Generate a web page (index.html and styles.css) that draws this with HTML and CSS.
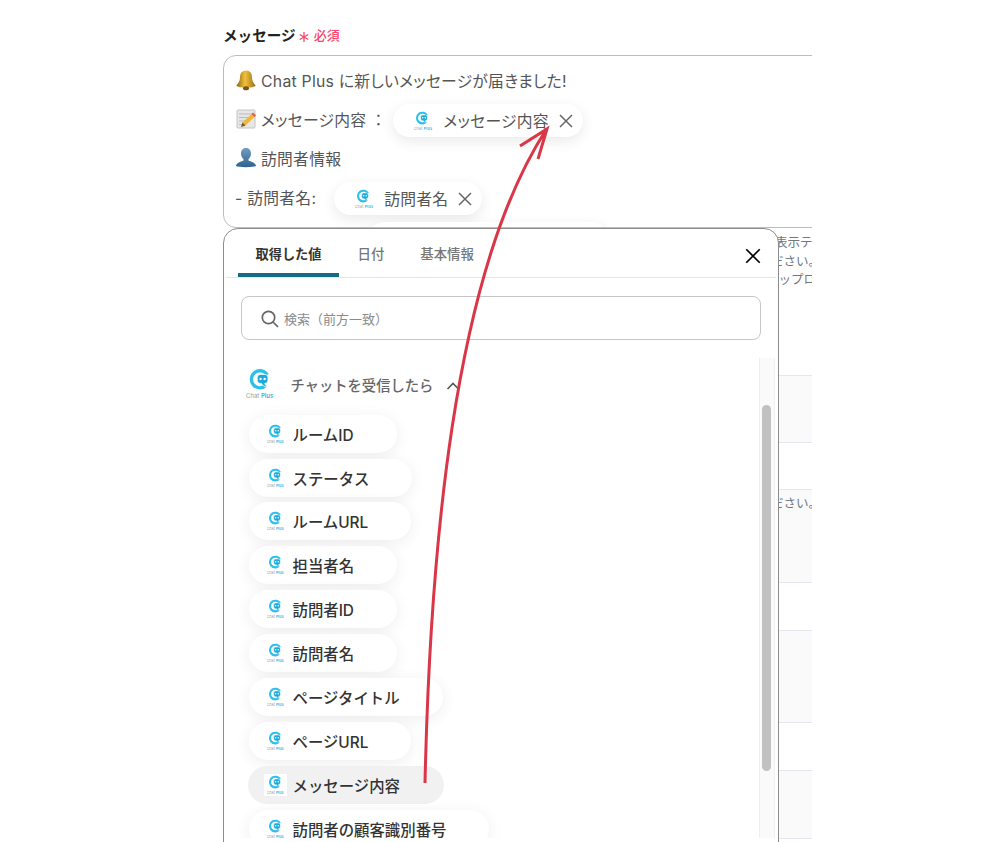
FILE: index.html
```html
<!DOCTYPE html>
<html lang="ja">
<head>
<meta charset="utf-8">
<title>メッセージ</title>
<link rel="stylesheet" href="styles.css">
</head>
<body>
<svg class="defs" width="0" height="0" aria-hidden="true">
  <symbol id="logo" viewBox="0 0 30 30">
    <path d="M19.700 16.200A8 8 0 1 1 20.900 6.500" fill="none" stroke="#2cc0ec" stroke-width="3.100"/>
    <path d="M14.300 6h4.400a2.800 2.800 0 0 1 2.800 2.800v2.900a2.800 2.800 0 0 1-2.800 2.800h-.2l2 3.500c-2.200-.4-3.900-1.800-5-3.500h-1.200a2.800 2.800 0 0 1-2.800-2.800V8.800A2.800 2.800 0 0 1 14.300 6z" fill="#1fa9da" stroke="#fff" stroke-width=".7"/>
    <circle cx="14.600" cy="10.200" r="1.100" fill="#fff"/>
    <circle cx="18.400" cy="10.200" r="1.100" fill="#fff"/>
    <text x="1" y="28.500" class="logo-text">Chat <tspan class="logo-plus">Plus</tspan></text>
  </symbol>
  <symbol id="close" viewBox="0 0 16 16">
    <path d="M2 2l12 12M14 2L2 14" fill="none" stroke="currentColor" stroke-width="1.500"/>
  </symbol>
</svg>

<div class="canvas">
  <div class="form">
    <div class="label-row">
      <span class="label">メッセージ</span>
      <svg class="asterisk" viewBox="0 0 10 10"><path d="M5 0v10M.7 2.500l8.600 5M.7 7.500l8.600-5" stroke="#f4476b" stroke-width="1.300"/></svg>
      <span class="required">必須</span>
    </div>

    <div class="editor">
      <div class="line">
        <svg class="emoji" viewBox="0 0 22 22">
          <defs><linearGradient id="bell" x1="0" x2="1"><stop offset="0" stop-color="#8a6414"/><stop offset=".45" stop-color="#f0c13c"/><stop offset="1" stop-color="#9a7015"/></linearGradient></defs>
          <path d="M11 1.500c-4 0-6 3-6 6.500 0 4-1.500 6-3.700 8.500 1 1.500 5 2.200 9.700 2.200s8.700-.7 9.700-2.200C18.500 14 17 12 17 8c0-3.500-2-6.500-6-6.500z" fill="url(#bell)"/>
          <ellipse cx="11" cy="19.300" rx="3" ry="2" fill="#7a5510"/>
        </svg>
        <span>Chat Plus に新しいメッセージが届きました!</span>
      </div>
      <div class="line">
        <svg class="emoji" viewBox="0 0 22 22">
          <rect x="2" y="2" width="18" height="18" rx="1" fill="#e6e6e6" stroke="#c4c4c4"/>
          <path d="M4 6h14M4 9.500h14M4 13h8M4 16.500h5" stroke="#bbb"/>
          <path d="M6 19l1.500-4.500L16.500 6l3 3-9 8.500z" fill="#f2b632"/>
          <path d="M16.500 6l1.500-1.500 3 3L19.500 9z" fill="#e2574c"/>
          <path d="M6 19l1.500-4.500 3 3z" fill="#6b5a3c"/>
        </svg>
        <span>メッセージ内容</span>
        <span class="colon">：</span>
        <span class="token token-a">
          <svg class="token-logo"><use href="#logo"/></svg>
          <span>メッセージ内容</span>
          <svg class="token-x"><use href="#close"/></svg>
        </span>
      </div>
      <div class="line">
        <svg class="emoji" viewBox="0 0 22 22">
          <defs><linearGradient id="bust" x1="0" x2="0" y1="0" y2="1"><stop offset="0" stop-color="#6f9dc4"/><stop offset="1" stop-color="#2f628e"/></linearGradient></defs>
          <path d="M11 1c-3.500 0-5 2.600-5 5.500 0 2.300 1 4.300 2.500 5.500v1.500c-2 1.200-7 1.800-7.500 5.500 3 1.500 17 1.500 20 0-.5-3.700-5.500-4.300-7.500-5.500V12c1.500-1.200 2.500-3.200 2.500-5.500C16 3.600 14.500 1 11 1z" fill="url(#bust)"/>
        </svg>
        <span>訪問者情報</span>
      </div>
      <div class="line">
        <span>- 訪問者名:</span>
        <span class="token token-b">
          <svg class="token-logo"><use href="#logo"/></svg>
          <span>訪問者名</span>
          <svg class="token-x"><use href="#close"/></svg>
        </span>
      </div>
      <div class="line">
        <span class="token token-c">
          <svg class="token-logo"><use href="#logo"/></svg>
          <span>訪問者の顧客識別番号</span>
        </span>
      </div>
    </div>

    <div class="notes">
      <p class="note-a">表示テキスト</p>
      <p class="note-b">ださい。</p>
      <p class="note-c">アップロード</p>
    </div>
    <div class="band band-tall-a"></div>
    <div class="band-plain band-plain-a"></div>
    <div class="band band-tall-b"><p class="band-note">ださい。</p></div>
    <div class="band-plain band-plain-b"></div>
    <div class="band band-tall-c"></div>
    <div class="band-plain band-plain-b"></div>
    <div class="band band-tall-d"></div>
  </div>

  <div class="popup">
    <div class="tabs">
      <span class="tab tab-active">取得した値</span>
      <span class="tab">日付</span>
      <span class="tab">基本情報</span>
      <svg class="popup-close"><use href="#close"/></svg>
    </div>
    <div class="search">
      <svg class="search-icon" viewBox="0 0 18 18"><circle cx="7.500" cy="7.500" r="6.200" fill="none" stroke="#666" stroke-width="1.700"/><path d="M12 12l5 5" stroke="#666" stroke-width="1.700"/></svg>
      <span>検索（前方一致）</span>
    </div>
    <div class="results">
      <div class="list">
        <div class="group">
          <svg class="group-logo"><use href="#logo"/></svg>
          <span class="group-name">チャットを受信したら</span>
          <svg class="chevron" viewBox="0 0 14 8"><path d="M1.500 7L7 1.500 12.500 7" fill="none" stroke="#555" stroke-width="1.600"/></svg>
        </div>
        <div class="chips">
          <div class="chip"><span class="chip-icon"><svg class="chip-logo"><use href="#logo"/></svg></span>ルームID</div>
          <div class="chip"><span class="chip-icon"><svg class="chip-logo"><use href="#logo"/></svg></span>ステータス</div>
          <div class="chip"><span class="chip-icon"><svg class="chip-logo"><use href="#logo"/></svg></span>ルームURL</div>
          <div class="chip"><span class="chip-icon"><svg class="chip-logo"><use href="#logo"/></svg></span>担当者名</div>
          <div class="chip"><span class="chip-icon"><svg class="chip-logo"><use href="#logo"/></svg></span>訪問者ID</div>
          <div class="chip"><span class="chip-icon"><svg class="chip-logo"><use href="#logo"/></svg></span>訪問者名</div>
          <div class="chip"><span class="chip-icon"><svg class="chip-logo"><use href="#logo"/></svg></span>ページタイトル</div>
          <div class="chip"><span class="chip-icon"><svg class="chip-logo"><use href="#logo"/></svg></span>ページURL</div>
          <div class="chip chip-hover"><span class="chip-icon"><svg class="chip-logo"><use href="#logo"/></svg></span>メッセージ内容</div>
          <div class="chip"><span class="chip-icon"><svg class="chip-logo"><use href="#logo"/></svg></span>訪問者の顧客識別番号</div>
        </div>
      </div>
      <div class="scrollbar"><div class="thumb"></div></div>
    </div>
  </div>

  <svg class="arrow" viewBox="0 0 1000 842" width="1000" height="842">
    <path d="M425 783C430 560 452 275 546 130M520 146L547 129 538 159" fill="none" stroke="#d93648" stroke-width="3"/>
  </svg>
</div>
</body>
</html>
```

FILE: styles.css
```css
* { box-sizing: border-box; }
html, body { margin: 0; padding: 0; background: #fff; }
body {
  width: 1000px;
  height: 842px;
  overflow: hidden;
  font-family: Inter, "Noto Sans CJK JP", sans-serif;
  color: #555;
  text-spacing-trim: space-all;
}
p { margin: 0; }
.defs { position: absolute; }
.logo-text { font: 5.600px Inter, sans-serif; fill: #999ea3; }
.logo-plus { font-weight: 600; fill: #29b9e8; }

.canvas {
  position: relative;
  width: 1000px;
  height: 842px;
  overflow: hidden;
  padding-left: 223px;
}
.form {
  width: 589px;
  height: 842px;
  overflow: hidden;
  padding-top: 23px;
}

.label-row {
  display: flex;
  align-items: center;
  height: 22px;
  margin-bottom: 10px;
}
.label { font-size: 14.600px; font-weight: 700; color: #222; }
.asterisk { width: 10px; height: 10px; margin: 6px 0 0 3px; flex: none; }
.required { font-size: 13px; color: #f8486c; margin-left: 5px; font-weight: 500; }

.editor {
  width: 640px;
  height: 173px;
  overflow: hidden;
  border: 1px solid #bdbdbd;
  border-radius: 13px;
  padding: 4.500px 0 0 11px;
  font-size: 15.800px;
  letter-spacing: .25px;
  font-feature-settings: "palt";
}
.line {
  display: flex;
  align-items: center;
  height: 39px;
  white-space: nowrap;
}
.colon { margin-left: 8px; }
.emoji { width: 22px; height: 22px; margin-right: 4px; flex: none; }
.token {
  display: inline-flex;
  align-items: center;
  height: 33px;
  margin-top: 3px;
  background: #fff;
  border-radius: 17px;
  box-shadow: 0 4px 14px rgba(0, 0, 0, .09);
  padding: 0 9px 0 20px;
}
.token-a { margin-left: 11px; }
.token-b { margin-left: 18px; }
.token-c { margin-left: 133px; margin-top: 5px; padding-right: 30px; }
.token-logo { width: 20px; height: 20px; margin-right: 10px; flex: none; }
.token-x { width: 16px; height: 16px; margin-left: 9px; color: #666; flex: none; }

.notes {
  height: 147px;
  padding-top: 6px;
  font-size: 12.500px;
  line-height: 18.500px;
  color: #6f7680;
  white-space: nowrap;
  overflow: hidden;
}
.note-a { padding-left: 552px; }
.note-b { padding-left: 548px; }
.note-c { padding-left: 543px; }
.band { background: #fafafa; border-top: 1px solid #e4e8ee; border-bottom: 1px solid #e4e8ee; }
.band-plain { background: #fff; }
.band-tall-a { height: 68px; }
.band-plain-a { height: 46px; }
.band-tall-b { height: 94px; }
.band-plain-b { height: 47px; }
.band-tall-c { height: 93px; }
.band-tall-d { height: 69px; }
.band-note {
  padding: 5px 0 0 548px;
  font-size: 12.500px;
  line-height: 18px;
  color: #6f7680;
  white-space: nowrap;
}

.popup {
  position: absolute;
  left: 223px;
  top: 228px;
  width: 555.500px;
  height: 640px;
  background: #fff;
  border: 1.500px solid #8c8c8c;
  border-radius: 15px;
}
.tabs {
  position: relative;
  display: flex;
  height: 48.500px;
  margin: 0 2px;
  padding-left: 12px;
  border-bottom: 1px solid #e6e6e6;
}
.tab {
  display: flex;
  align-items: center;
  justify-content: center;
  height: 47.500px;
  padding: 1px 0 0;
  font-size: 13.400px;
  font-weight: 500;
  color: #777;
  margin-right: 36px;
}
.tab-active {
  width: 101px;
  margin-right: 18.500px;
  padding-top: 5px;
  color: #333;
  font-size: 13.200px;
  font-weight: 700;
  border-bottom: 4px solid #176b82;
  border-radius: 4px 4px 0 0;
}
.popup-close {
  position: absolute;
  right: 14px;
  top: 18px;
  width: 18px;
  height: 18px;
  color: #000;
}
.search {
  display: flex;
  align-items: center;
  height: 44px;
  margin: 18.500px 16.500px 0 17px;
  padding: 1px 0 0 19px;
  border: 1px solid #c6c6c6;
  border-radius: 8px;
  font-size: 13px;
  color: #8a8a8a;
}
.search-icon { width: 18px; height: 18px; margin-right: 5px; }

.results {
  display: flex;
  height: 480px;
  margin-top: 18px;
  padding-right: 3px;
}
.list { flex: 1; min-width: 0; overflow: hidden; }
.group {
  display: flex;
  align-items: center;
  height: 56.700px;
  padding: 0 0 4px 20.500px;
}
.group-logo { width: 32px; height: 32px; flex: none; margin-right: 14px; }
.group-name { font-size: 14.300px; font-weight: 500; color: #666; }
.chevron { width: 14px; height: 8px; margin-left: 13px; margin-top: 3px; }

.chips {
  display: flex;
  flex-direction: column;
  align-items: flex-start;
  gap: 5.900px;
  padding-left: 25px;
}
.chip {
  display: flex;
  align-items: center;
  flex: none;
  height: 38px;
  padding-left: 15px;
  padding-right: 43px;
  border-radius: 19px;
  background: #fff;
  box-shadow: 0 3px 16px rgba(0, 0, 0, .07);
  font-size: 15.400px;
  font-weight: 500;
  color: #333;
  white-space: nowrap;
}
.chip-hover { background: #f1f1f1; box-shadow: none; margin-left: -1px; padding-left: 16px; padding-right: 44px; }
.chip-icon {
  display: flex;
  align-items: center;
  justify-content: center;
  width: 23px;
  height: 22px;
  background: #fff;
  margin-right: 5.500px;
  flex: none;
}
.chip-logo { width: 20px; height: 20px; }

.scrollbar {
  width: 16px;
  flex: none;
  background: #fafafa;
  border-left: 1px solid #efefef;
  border-right: 1px solid #efefef;
  padding: 47px 2.500px 0;
}
.thumb { height: 366px; background: #c1c1c1; border-radius: 5px; }

.arrow { position: absolute; left: 0; top: 0; pointer-events: none; }
```
